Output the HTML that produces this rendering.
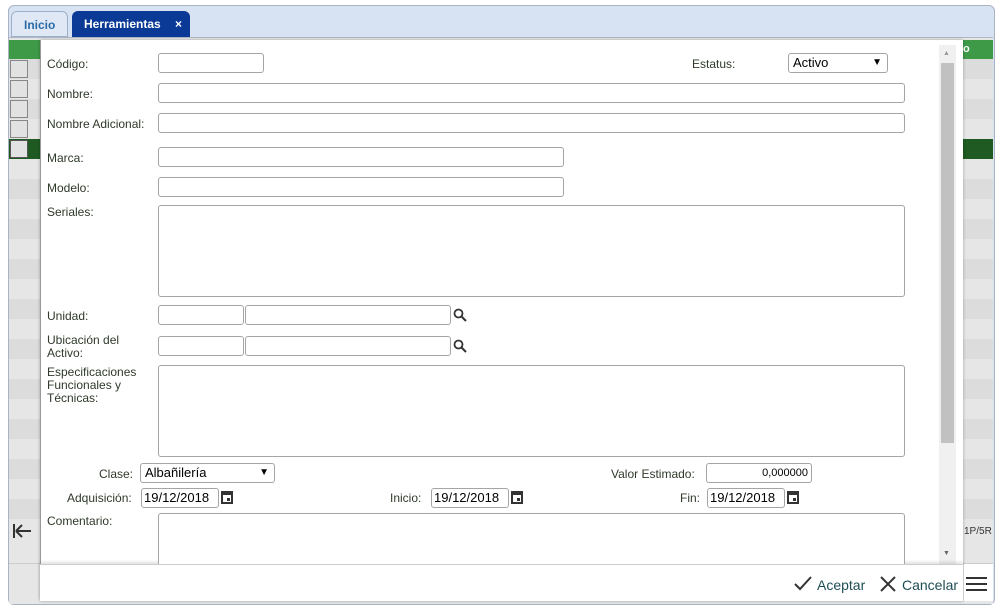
<!DOCTYPE html>
<html><head><meta charset="utf-8"><style>
*{box-sizing:border-box;margin:0;padding:0}
body{width:1003px;height:611px;background:#fff;font-family:"Liberation Sans",sans-serif;position:relative;overflow:hidden}
.a{position:absolute}
.win{left:8px;top:5px;width:987px;height:600px;background:#d7e3f3;border:1px solid #a9b3c2;border-radius:6px}
.tab{top:11px;height:26px;border-radius:6px 6px 0 0;font-size:12px;font-weight:bold;padding:6px 12px}
.lbl{font-size:12px;color:#2f3a2a}
.in{border:1px solid #a5a5a5;border-radius:3px;background:#fff;height:20px}
.row{left:9px;width:984px;height:20px}
.sq{left:10px;width:18px;height:18px;border:1px solid #888;background:#e2e2e2}
.cal{width:12px;height:13px;border:2px solid #333;border-top-width:4px}
.cal:after{content:"";position:absolute;right:1px;bottom:1px;width:3px;height:3px;background:#333}
</style></head><body>
<div class="a win"></div>
<div class="a tab" style="left:11px;width:57px;background:#dfe8f4;border:1px solid #9eb0c8;color:#2b6ba8">Inicio</div>
<div class="a tab" style="left:72px;width:118px;background:#0a3a96;color:#fff">Herramientas<span style="position:absolute;right:8px">×</span></div>
<div class="a" style="left:9px;top:37px;width:984px;height:567px;background:#e6e6e6;border-top:1px solid #b0b8c4"></div>
<div class="a row" style="top:40px;background:#3f9a48"></div>
<div class="a" style="left:960px;top:43px;color:#fff;font-size:11px;font-weight:bold">lo</div>
<div class="a row" style="top:59px;background:#dcdcdc"></div>
<div class="a row" style="top:79px;background:#e6e6e6"></div>
<div class="a row" style="top:99px;background:#dcdcdc"></div>
<div class="a row" style="top:119px;background:#e6e6e6"></div>
<div class="a row" style="top:139px;background:#1e5a22"></div>
<div class="a row" style="top:159px;height:360px;background:repeating-linear-gradient(#e6e6e6 0 20px,#dcdcdc 20px 40px)"></div>
<div class="a sq" style="top:60px"></div><div class="a sq" style="top:80px"></div><div class="a sq" style="top:100px"></div><div class="a sq" style="top:120px"></div><div class="a sq" style="top:140px;border-color:#555"></div>
<svg class="a" style="left:12px;top:523px" width="20" height="16"><path d="M2 1v14M4 8h15M4 8l6-6M4 8l6 6" stroke="#333" stroke-width="2" fill="none"/></svg>
<div class="a" style="left:964px;top:526px;font-size:10px;color:#333">1P/5R</div>
<div class="a" style="left:9px;top:563px;width:984px;height:40px;background:#e6e6e6;border-top:1px solid #ccc"></div>

<div class="a" style="left:40px;top:40px;width:923px;height:561px;background:#fff;border-left:1px solid #999;box-shadow:0 0 3px rgba(0,0,0,.3)"></div>
<div class="a" style="left:939px;top:45px;width:17px;height:519px;background:#f0f0f0"></div>
<div class="a" style="left:941px;top:63px;width:13px;height:380px;background:#c1c1c1"></div>
<div class="a" style="left:943px;top:50px;font-size:7px;color:#999">▲</div>
<div class="a" style="left:943px;top:550px;font-size:7px;color:#666">▼</div>
<div class="a" style="left:40px;top:564px;width:923px;height:37px;background:#fff;border-top:1px solid #ccc;box-shadow:0 -2px 3px rgba(0,0,0,.12)"></div>
<div class="a" style="left:963px;top:564px;width:30px;height:37px;background:#fff;border-left:1px solid #ccc"></div>
<div class="a" style="left:966px;top:577px;width:21px;height:2px;background:#333;box-shadow:0 6px 0 #333,0 12px 0 #333"></div>
<svg class="a" style="left:794px;top:576px" width="18" height="15"><path d="M1 8l5 5L17 1" stroke="#333" stroke-width="2" fill="none"/></svg>
<div class="a" style="left:817px;top:577px;font-size:14px;color:#1f4d55">Aceptar</div>
<svg class="a" style="left:880px;top:576px" width="16" height="16"><path d="M1 1l14 14M15 1L1 15" stroke="#333" stroke-width="2" fill="none"/></svg>
<div class="a" style="left:902px;top:577px;font-size:14px;color:#1f4d55">Cancelar</div>

<div class="a lbl" style="left:47px;top:57px">Código:</div>
<div class="a in" style="left:158px;top:53px;width:106px"></div>
<div class="a lbl" style="left:692px;top:57px">Estatus:</div>
<div class="a in" style="left:788px;top:53px;width:100px;font-size:13px;padding:1px 4px">Activo<span style="position:absolute;right:5px;font-size:10px;top:3px">▼</span></div>
<div class="a lbl" style="left:47px;top:87px">Nombre:</div>
<div class="a in" style="left:158px;top:83px;width:747px"></div>
<div class="a lbl" style="left:47px;top:117px">Nombre Adicional:</div>
<div class="a in" style="left:158px;top:113px;width:747px"></div>
<div class="a lbl" style="left:47px;top:151px">Marca:</div>
<div class="a in" style="left:158px;top:147px;width:406px"></div>
<div class="a lbl" style="left:47px;top:181px">Modelo:</div>
<div class="a in" style="left:158px;top:177px;width:406px"></div>
<div class="a lbl" style="left:47px;top:205px">Seriales:</div>
<div class="a in" style="left:158px;top:205px;width:747px;height:92px"></div>
<div class="a lbl" style="left:47px;top:309px">Unidad:</div>
<div class="a in" style="left:158px;top:305px;width:86px"></div>
<div class="a in" style="left:245px;top:305px;width:206px"></div>
<svg class="a" style="left:453px;top:308px" width="14" height="14"><circle cx="5.5" cy="5.5" r="4" stroke="#333" stroke-width="1.8" fill="none"/><path d="M8.5 8.5l4.5 4.5" stroke="#333" stroke-width="2"/></svg>
<div class="a lbl" style="left:47px;top:334px;line-height:13px">Ubicación del<br>Activo:</div>
<div class="a in" style="left:158px;top:336px;width:86px"></div>
<div class="a in" style="left:245px;top:336px;width:206px"></div>
<svg class="a" style="left:453px;top:339px" width="14" height="14"><circle cx="5.5" cy="5.5" r="4" stroke="#333" stroke-width="1.8" fill="none"/><path d="M8.5 8.5l4.5 4.5" stroke="#333" stroke-width="2"/></svg>
<div class="a lbl" style="left:47px;top:366px;line-height:13px">Especificaciones<br>Funcionales y<br>Técnicas:</div>
<div class="a in" style="left:158px;top:365px;width:747px;height:92px"></div>
<div class="a lbl" style="left:99px;top:467px">Clase:</div>
<div class="a in" style="left:140px;top:463px;width:135px;font-size:13px;padding:1px 4px">Albañilería<span style="position:absolute;right:5px;font-size:10px;top:3px">▼</span></div>
<div class="a lbl" style="left:611px;top:467px">Valor Estimado:</div>
<div class="a in" style="left:706px;top:463px;width:106px;font-size:11px;text-align:right;padding:3px 3px">0,000000</div>
<div class="a lbl" style="left:67px;top:491px">Adquisición:</div>
<div class="a in" style="left:141px;top:488px;width:78px;font-size:13px;padding:1px 2px">19/12/2018</div>
<div class="a lbl" style="left:390px;top:491px">Inicio:</div>
<div class="a in" style="left:431px;top:488px;width:78px;font-size:13px;padding:1px 2px">19/12/2018</div>
<div class="a lbl" style="left:680px;top:491px">Fin:</div>
<div class="a in" style="left:707px;top:488px;width:78px;font-size:13px;padding:1px 2px">19/12/2018</div>
<div class="a cal" style="left:221px;top:491px"></div>
<div class="a cal" style="left:511px;top:491px"></div>
<div class="a cal" style="left:787px;top:491px"></div>
<div class="a lbl" style="left:47px;top:514px">Comentario:</div>
<div class="a in" style="left:158px;top:513px;width:747px;height:60px;border-bottom:none;border-radius:3px 3px 0 0;clip-path:inset(0 0 9px 0)"></div>
</body></html>
